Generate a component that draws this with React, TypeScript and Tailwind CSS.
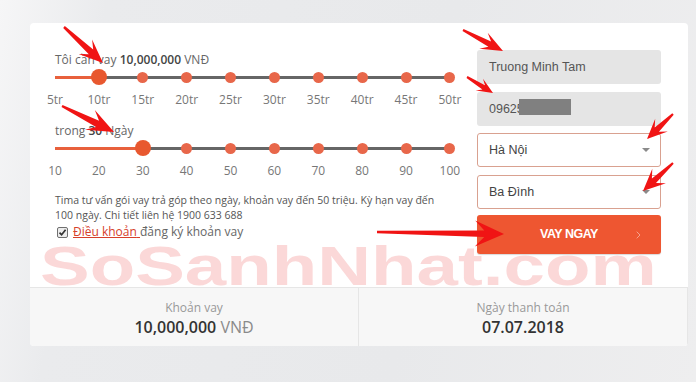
import React from "react";

type Arrow = { t: [number, number]; p: [number, number]; L: number; W: number; w0: number; w1: number };

function arrowPoints(a: Arrow): string {
  const [tx, ty] = a.t;
  const [px, py] = a.p;
  const dx = px - tx;
  const dy = py - ty;
  const len = Math.hypot(dx, dy);
  const ux = dx / len;
  const uy = dy / len;
  const nx = -uy;
  const ny = ux;
  const bx = px - ux * a.L;
  const by = py - uy * a.L;
  const kx = px - ux * a.L * 0.68;
  const ky = py - uy * a.L * 0.68;
  const pts: [number, number][] = [
    [px, py],
    [bx + nx * a.W, by + ny * a.W],
    [kx + nx * a.w1, ky + ny * a.w1],
    [tx + nx * a.w0, ty + ny * a.w0],
    [tx - nx * a.w0, ty - ny * a.w0],
    [kx - nx * a.w1, ky - ny * a.w1],
    [bx - nx * a.W, by - ny * a.W],
  ];
  return pts.map((q) => `${q[0].toFixed(1)},${q[1].toFixed(1)}`).join(" ");
}

const arrows: Arrow[] = [
  { t: [64, 27], p: [103, 63], L: 24, W: 10, w0: 1.2, w1: 3.2 },
  { t: [62, 106], p: [114, 132], L: 27, W: 11, w0: 1.2, w1: 3.5 },
  { t: [463, 30], p: [503, 51], L: 22, W: 9, w0: 1, w1: 3 },
  { t: [467, 77], p: [493, 93], L: 16, W: 7, w0: 1, w1: 2.5 },
  { t: [673, 114], p: [647, 139], L: 20, W: 9, w0: 1, w1: 3 },
  { t: [673, 163], p: [643, 191], L: 22, W: 10, w0: 1, w1: 3 },
  { t: [377, 232], p: [504, 234], L: 29, W: 13, w0: 1.2, w1: 3.2 },
];

const moneyTicks = ["5tr", "10tr", "15tr", "20tr", "25tr", "30tr", "35tr", "40tr", "45tr", "50tr"];
const dayTicks = ["10", "20", "30", "40", "50", "60", "70", "80", "90", "100"];

function Slider({ value }: { value: number }) {
  const step = 395 / 9;
  const knobX = 8 + value * step;
  return (
    <div className="relative ml-[12px] flex h-4 w-[411px] items-center justify-between">
      <div className="absolute left-[8px] top-[6.5px] h-[3px] bg-[#e8603c]" style={{ width: knobX - 8 }} />
      <div className="absolute top-[6.5px] h-[3px] bg-[#666666]" style={{ left: knobX, width: 403 - knobX }} />
      {moneyTicks.map((_, i) => (
        <div key={i} className="relative flex h-4 w-4 items-center justify-center">
          {i === value ? (
            <div className="h-[16px] w-[16px] rounded-full bg-[#e8582f]" />
          ) : i > value ? (
            <div className="h-[11px] w-[11px] rounded-full bg-[#e8674a]" />
          ) : null}
        </div>
      ))}
    </div>
  );
}

function Ticks({ items }: { items: string[] }) {
  return (
    <div className="mt-[6px] flex h-[18px] w-[435px] justify-between text-[12px] leading-[18px] text-[#777]">
      {items.map((t) => (
        <div key={t} className="w-10 text-center">
          {t}
        </div>
      ))}
    </div>
  );
}

export default function App() {
  return (
    <div
      className="relative h-[382px] w-[696px] overflow-hidden bg-[linear-gradient(100deg,#f6f6f7_0%,#eaebed_14%,#e8e9eb_60%,#eeeeef_100%)] pt-[23px]"
      style={{ fontFamily: '"Open Sans", "Noto Sans", sans-serif' }}
    >
      <div className="ml-[30px] flex h-[323px] w-[658px] flex-col overflow-hidden rounded-[4px] bg-white">
        <div className="flex h-[264px]">
          {/* left column */}
          <div className="flex w-[440px] flex-col pl-[5px] pt-[28px]">
            <div className="ml-[20px] h-[18px] text-[12px] leading-[18px] text-[#666] whitespace-nowrap">
              Tôi cần vay <span className="font-semibold text-[#444]">10,000,000</span> VNĐ
            </div>
            <Slider value={1} />
            <Ticks items={moneyTicks} />
            <div className="ml-[20px] mt-[13px] h-[18px] text-[12px] leading-[18px] text-[#666] whitespace-nowrap">
              trong <span className="font-semibold text-[#444]">30</span> Ngày
            </div>
            <Slider value={2} />
            <Ticks items={dayTicks} />
            <div className="ml-[20px] mt-[13px] text-[10.5px] leading-[15px] text-[#555] whitespace-nowrap">
              Tima tư vấn gói vay trả góp theo ngày, khoản vay đến 50 triệu. Kỳ hạn vay đến
              <br />
              100 ngày. Chi tiết liên hệ 1900 633 688
            </div>
            <div className="ml-[22px] flex h-[18px] items-center text-[12px] leading-[18px] text-[#666] whitespace-nowrap">
              <span className="mr-[5px] flex h-[11px] w-[11px] items-center justify-center rounded-[2px] border border-[#6f6f6f] bg-[#ececec]">
                <svg width="9" height="9" viewBox="0 0 9 9">
                  <path d="M1.5 4.6 L3.6 6.8 L7.6 1.8" fill="none" stroke="#333" strokeWidth="1.7" />
                </svg>
              </span>
              <span className="text-[#d6402a] underline">Điều khoản{"\u00a0"}</span>
              <span>đăng ký khoản vay</span>
            </div>
          </div>

          {/* right column */}
          <div
            className="ml-[7px] flex w-[184px] flex-col pt-[27px]"
            style={{ fontFamily: '"Liberation Sans", Arial, sans-serif' }}
          >
            <div className="flex h-[34px] items-center rounded-[3px] bg-[#e5e5e5] pl-[12px] text-[12.5px] text-[#555]">
              Truong Minh Tam
            </div>
            <div className="mt-[8px] flex h-[34px] items-center rounded-[3px] bg-[#e5e5e5] pl-[12px] text-[12.5px] text-[#555]">
              <span className="relative">
                09625
                <span className="absolute left-[30px] top-[-1px] h-[16px] w-[52px] bg-[#808080]" />
              </span>
            </div>
            <div className="mt-[7px] flex h-[34px] items-center justify-between rounded-[3px] border border-[#d9a190] bg-white pl-[11px] pr-[10px] text-[12.5px] text-[#444]">
              <span>Hà Nội</span>
              <span className="h-0 w-0 border-x-[4px] border-t-[4px] border-x-transparent border-t-[#8a8a8a]" />
            </div>
            <div className="mt-[8px] flex h-[34px] items-center justify-between rounded-[3px] border border-[#d9a190] bg-white pl-[11px] pr-[10px] text-[12.5px] text-[#444]">
              <span>Ba Đình</span>
              <span className="h-0 w-0 border-x-[4px] border-t-[4px] border-x-transparent border-t-[#8a8a8a]" />
            </div>
            <div className="relative mt-[6px] flex h-[39px] items-center justify-center rounded-[3px] bg-[#ee5631] shadow-[0_1px_1px_rgba(0,0,0,0.15)]">
              <span className="text-[12.5px] font-bold tracking-[-0.5px] text-white">VAY NGAY</span>
              <svg className="absolute right-[20px] top-[16px]" width="5" height="8" viewBox="0 0 5 8">
                <path d="M0.7 0.7 L4 4 L0.7 7.3" fill="none" stroke="rgba(255,255,255,0.45)" strokeWidth="1" />
              </svg>
            </div>
          </div>
        </div>

        {/* bottom panels */}
        <div className="flex h-[59px] border-t border-[#e6e6e6] bg-[#f7f7f7]">
          <div className="flex w-[328px] flex-col items-center pt-[11px]">
            <div className="h-[18px] text-[12px] leading-[18px] text-[#999]">Khoản vay</div>
            <div className="h-[20px] text-[16px] leading-[20px] text-[#333]">
              <span className="font-semibold">10,000,000</span> <span className="text-[#8a8a8a]">VNĐ</span>
            </div>
          </div>
          <div className="flex flex-1 flex-col items-center border-l border-r border-[#e6e6e6] pt-[11px]">
            <div className="h-[18px] text-[12px] leading-[18px] text-[#999]">Ngày thanh toán</div>
            <div className="h-[20px] text-[16px] font-semibold leading-[20px] text-[#333]">07.07.2018</div>
          </div>
        </div>
      </div>

      {/* watermark */}
      <div
        className="pointer-events-none absolute left-[40px] top-[238px] origin-left scale-x-[1.33] whitespace-nowrap text-[56px] font-bold leading-[56px] text-[rgba(232,40,40,0.18)]"
        style={{ fontFamily: '"Liberation Sans", Arial, sans-serif' }}
      >
        SoSanhNhat.com
      </div>

      {/* annotation arrows */}
      <svg className="pointer-events-none absolute left-0 top-0" width="696" height="382">
        {arrows.map((a, i) => (
          <polygon key={i} points={arrowPoints(a)} fill="#f01414" />
        ))}
      </svg>
    </div>
  );
}
